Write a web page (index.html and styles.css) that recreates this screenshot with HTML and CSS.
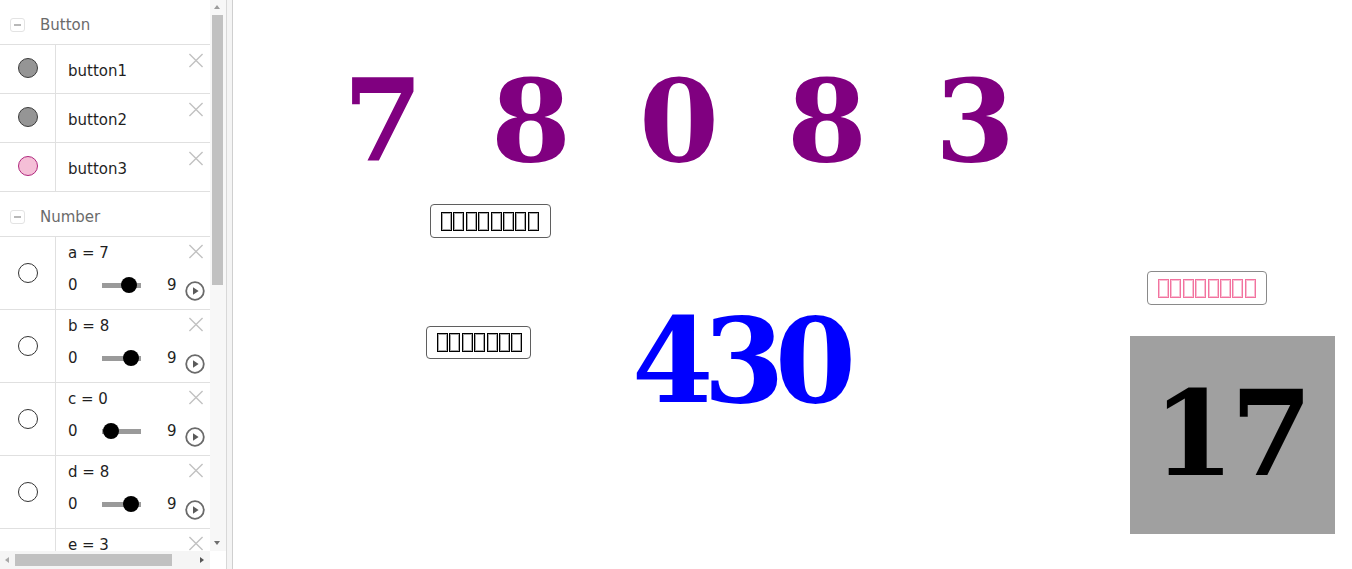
FILE: index.html
```html
<!DOCTYPE html>
<html lang="en">
<head>
<meta charset="utf-8">
<title>GeoGebra</title>
<link rel="stylesheet" href="styles.css">
</head>
<body>
<div class="app">
  <aside class="algebra">
    <div class="list">
      <div class="group-head"><span class="toggle"></span><span class="group-name">Button</span></div>

      <div class="item item-btn">
        <div class="marble"><span class="dot dot-grey"></span></div>
        <div class="content"><span class="label">button1</span></div>
        <div class="actions">
          <svg class="close" viewBox="0 0 16 16"><path d="M1 1 L15 15 M15 1 L1 15"/></svg>
        </div>
      </div>
      <div class="item item-btn">
        <div class="marble"><span class="dot dot-grey"></span></div>
        <div class="content"><span class="label">button2</span></div>
        <div class="actions">
          <svg class="close" viewBox="0 0 16 16"><path d="M1 1 L15 15 M15 1 L1 15"/></svg>
        </div>
      </div>
      <div class="item item-btn">
        <div class="marble"><span class="dot dot-pink"></span></div>
        <div class="content"><span class="label">button3</span></div>
        <div class="actions">
          <svg class="close" viewBox="0 0 16 16"><path d="M1 1 L15 15 M15 1 L1 15"/></svg>
        </div>
      </div>

      <div class="group-head"><span class="toggle"></span><span class="group-name">Number</span></div>

      <div class="item item-num">
        <div class="marble"><span class="dot dot-empty"></span></div>
        <div class="content">
          <div class="label">a = 7</div>
          <div class="slider-row"><span class="min">0</span><span class="track"><span class="knob" style="left:18px"></span></span><span class="max">9</span></div>
        </div>
        <div class="actions">
          <svg class="close" viewBox="0 0 16 16"><path d="M1 1 L15 15 M15 1 L1 15"/></svg>
          <svg class="play" viewBox="0 0 20 20"><circle cx="10" cy="10" r="8.8"/><path d="M8 6.3 L13.6 10 L8 13.7 Z"/></svg>
        </div>
      </div>
      <div class="item item-num">
        <div class="marble"><span class="dot dot-empty"></span></div>
        <div class="content">
          <div class="label">b = 8</div>
          <div class="slider-row"><span class="min">0</span><span class="track"><span class="knob" style="left:20.5px"></span></span><span class="max">9</span></div>
        </div>
        <div class="actions">
          <svg class="close" viewBox="0 0 16 16"><path d="M1 1 L15 15 M15 1 L1 15"/></svg>
          <svg class="play" viewBox="0 0 20 20"><circle cx="10" cy="10" r="8.8"/><path d="M8 6.3 L13.6 10 L8 13.7 Z"/></svg>
        </div>
      </div>
      <div class="item item-num">
        <div class="marble"><span class="dot dot-empty"></span></div>
        <div class="content">
          <div class="label">c = 0</div>
          <div class="slider-row"><span class="min">0</span><span class="track"><span class="knob" style="left:0px"></span></span><span class="max">9</span></div>
        </div>
        <div class="actions">
          <svg class="close" viewBox="0 0 16 16"><path d="M1 1 L15 15 M15 1 L1 15"/></svg>
          <svg class="play" viewBox="0 0 20 20"><circle cx="10" cy="10" r="8.8"/><path d="M8 6.3 L13.6 10 L8 13.7 Z"/></svg>
        </div>
      </div>
      <div class="item item-num">
        <div class="marble"><span class="dot dot-empty"></span></div>
        <div class="content">
          <div class="label">d = 8</div>
          <div class="slider-row"><span class="min">0</span><span class="track"><span class="knob" style="left:20.5px"></span></span><span class="max">9</span></div>
        </div>
        <div class="actions">
          <svg class="close" viewBox="0 0 16 16"><path d="M1 1 L15 15 M15 1 L1 15"/></svg>
          <svg class="play" viewBox="0 0 20 20"><circle cx="10" cy="10" r="8.8"/><path d="M8 6.3 L13.6 10 L8 13.7 Z"/></svg>
        </div>
      </div>
      <div class="item item-num">
        <div class="marble"><span class="dot dot-empty"></span></div>
        <div class="content">
          <div class="label">e = 3</div>
          <div class="slider-row"><span class="min">0</span><span class="track"><span class="knob" style="left:7.7px"></span></span><span class="max">9</span></div>
        </div>
        <div class="actions">
          <svg class="close" viewBox="0 0 16 16"><path d="M1 1 L15 15 M15 1 L1 15"/></svg>
          <svg class="play" viewBox="0 0 20 20"><circle cx="10" cy="10" r="8.8"/><path d="M8 6.3 L13.6 10 L8 13.7 Z"/></svg>
        </div>
      </div>
    </div>

    <div class="vscroll">
      <span class="arrow-cell"><span class="arrow arrow-up"></span></span>
      <span class="vthumb"></span>
      <span class="vspacer"></span>
      <span class="arrow-cell arrow-cell-down"><span class="arrow arrow-down"></span></span>
    </div>
    <div class="hscroll">
      <span class="harrow-cell"><span class="arrow arrow-left"></span></span>
      <span class="hthumb"></span>
      <span class="hspacer"></span>
      <span class="harrow-cell"><span class="arrow arrow-right"></span></span>
    </div>
    <div class="corner"></div>
  </aside>

  <div class="splitter"></div>

  <main class="canvas">
    <div class="digits">
      <span class="digit">7</span>
      <span class="digit">8</span>
      <span class="digit">0</span>
      <span class="digit">8</span>
      <span class="digit">3</span>
    </div>

    <div class="gbtn gbtn-1" title="button1"><span class="tofu"></span><span class="tofu"></span><span class="tofu"></span><span class="tofu"></span><span class="tofu"></span><span class="tofu"></span><span class="tofu"></span><span class="tofu"></span></div>
    <div class="gbtn gbtn-2" title="button2"><span class="tofu"></span><span class="tofu"></span><span class="tofu"></span><span class="tofu"></span><span class="tofu"></span><span class="tofu"></span><span class="tofu"></span></div>
    <div class="gbtn gbtn-3" title="button3"><span class="tofu"></span><span class="tofu"></span><span class="tofu"></span><span class="tofu"></span><span class="tofu"></span><span class="tofu"></span><span class="tofu"></span><span class="tofu"></span></div>

    <div class="result">430</div>

    <div class="score"><span class="score-num">17</span></div>
  </main>
</div>
</body>
</html>
```

FILE: styles.css
```css
* { box-sizing: border-box; }

html, body {
  margin: 0;
  padding: 0;
  background: #ffffff;
}

body {
  font-family: "DejaVu Sans", "Noto Sans", sans-serif;
  overflow: hidden;
}

.app {
  display: flex;
  width: 1352px;
  height: 569px;
}

/* ---------- Algebra view ---------- */
.algebra {
  flex: none;
  width: 226px;
  height: 569px;
  display: grid;
  grid-template-columns: 210px 16px;
  grid-template-rows: 551px 18px;
  background: #fff;
}

.list {
  overflow: hidden;
  display: flex;
  flex-direction: column;
}

.group-head {
  flex: none;
  height: 45px;
  display: flex;
  align-items: center;
  border-bottom: 1px solid #e0e0e0;
  padding-left: 10px;
  padding-top: 6px;
}

.toggle {
  position: relative;
  width: 15px;
  height: 14px;
  border: 1px solid #e3e3e3;
  border-radius: 3px;
}

.toggle::after {
  content: "";
  position: absolute;
  left: 3px;
  right: 3px;
  top: 5px;
  height: 1.5px;
  background: #b8b8b8;
}

.group-name {
  margin-left: 15px;
  font-size: 15px;
  color: #6b6b6b;
}

.item {
  flex: none;
  display: grid;
  grid-template-columns: 56px 1fr 28px;
  border-bottom: 1px solid #e0e0e0;
}

.item-btn { height: 49px; }
.item-num { height: 73px; }

.marble {
  display: flex;
  align-items: center;
  justify-content: center;
  border-right: 1px solid #e0e0e0;
}

.item-btn .marble { padding-bottom: 2px; }

.dot {
  width: 20px;
  height: 20px;
  border-radius: 50%;
  margin-left: 1px;
}

.dot-grey {
  background: #959595;
  border: 1px solid #3c3c3c;
}

.dot-pink {
  background: #f5bfd7;
  border: 1px solid #b0277d;
}

.dot-empty {
  background: #fff;
  border: 1px solid #333;
}

.content {
  padding-left: 12px;
  color: #1f1f1f;
  font-size: 15px;
  line-height: 18px;
}

.item-btn .content { padding-top: 17px; }
.item-num .content { padding-top: 7px; }

.slider-row {
  display: flex;
  align-items: center;
  margin-top: 14px;
  height: 18px;
}

.min { width: 9px; }

.track {
  position: relative;
  width: 39px;
  height: 5px;
  margin-left: 25px;
  background: #9a9a9a;
}

.knob {
  position: absolute;
  top: -5.5px;
  margin-left: 0.5px;
  width: 16px;
  height: 16px;
  border-radius: 50%;
  background: #000;
}

.max { margin-left: 26px; }

.actions {
  display: flex;
  flex-direction: column;
  align-items: center;
  padding-top: 8px;
}

.item-num .actions { padding-top: 7px; }

.close {
  width: 16px;
  height: 15px;
  fill: none;
  stroke: #c2c2c2;
  stroke-width: 1.5;
}

.play {
  width: 20px;
  height: 20px;
  margin-top: 22px;
  margin-left: -3px;
}

.play circle {
  fill: none;
  stroke: #6a6a6a;
  stroke-width: 1.8;
}

.play path { fill: #5a5a5a; }

/* scrollbars */
.vscroll {
  display: flex;
  flex-direction: column;
  background: #f7f7f7;
}

.arrow-cell {
  height: 14px;
  display: flex;
  align-items: center;
  justify-content: center;
  padding-right: 2px;
}

.arrow-cell-down { height: 16px; }

.arrow { width: 0; height: 0; }

.arrow-up {
  border-left: 3.5px solid transparent;
  border-right: 3.5px solid transparent;
  border-bottom: 4px solid #9c9c9c;
}

.arrow-down {
  border-left: 3.5px solid transparent;
  border-right: 3.5px solid transparent;
  border-top: 4px solid #6e6e6e;
}

.vthumb {
  margin-top: 1px;
  margin-left: 2px;
  width: 11px;
  height: 270px;
  background: #c1c1c1;
}

.vspacer { flex: 1; }

.hscroll {
  display: flex;
  align-items: center;
  background: #f5f5f5;
}

.harrow-cell {
  width: 14px;
  height: 18px;
  display: flex;
  align-items: center;
  justify-content: center;
}

.arrow-left {
  border-top: 3.5px solid transparent;
  border-bottom: 3.5px solid transparent;
  border-right: 4px solid #a8a8a8;
}

.arrow-right {
  border-top: 3.5px solid transparent;
  border-bottom: 3.5px solid transparent;
  border-left: 4px solid #555;
  margin-left: -3px;
}

.hthumb {
  margin-left: 1px;
  width: 157px;
  height: 12px;
  background: #c1c1c1;
}

.hspacer { flex: 1; }

.corner { background: #fff; }

.splitter {
  flex: none;
  width: 7px;
  height: 569px;
  background: #f4f4f4;
  border-left: 1px solid #d8d8d8;
  border-right: 1px solid #cfcfcf;
}

/* ---------- Graphics view ---------- */
.canvas {
  position: relative;
  flex: 1;
  height: 569px;
  background: #fff;
  overflow: hidden;
}

.digits {
  position: absolute;
  left: 76px;
  top: 63px;
  display: flex;
}

.digit {
  width: 148px;
  text-align: center;
  font-family: "DejaVu Serif", "Liberation Serif", serif;
  font-weight: bold;
  font-size: 115px;
  line-height: 1;
  color: #800080;
}

.gbtn {
  position: absolute;
  display: flex;
  align-items: center;
  gap: 1.4px;
  padding-left: 10px;
  border: 1px solid #5f5f5f;
  border-radius: 4px;
  background: #fff;
}

.gbtn-1 { left: 197px; top: 204px; width: 121px; height: 34px; }
.gbtn-2 { left: 193px; top: 326px; width: 105px; height: 33px; }
.gbtn-3 { left: 914px; top: 271px; width: 120px; height: 34px; border-color: #8a8a8a; }

.tofu {
  width: 11px;
  height: 19px;
  border: 1px solid #000;
  box-shadow: inset 0 0 0 1px rgba(0, 0, 0, 0.35);
}

.gbtn-3 .tofu {
  border-color: #f2739f;
  box-shadow: inset 0 0 0 1px rgba(242, 115, 159, 0.45);
}

.result {
  position: absolute;
  left: 350px;
  top: 303px;
  width: 300px;
  padding-left: 12px;
  text-align: center;
  font-family: "DejaVu Serif", "Liberation Serif", serif;
  font-weight: bold;
  font-size: 117px;
  line-height: 1;
  letter-spacing: -10px;
  color: #0000ff;
}

.score {
  position: absolute;
  left: 897px;
  top: 336px;
  width: 205px;
  height: 198px;
  background: #a0a0a0;
  display: flex;
  align-items: center;
  justify-content: center;
  padding-right: 4px;
  padding-bottom: 3px;
}

.score-num {
  font-family: "DejaVu Serif", "Liberation Serif", serif;
  font-weight: bold;
  font-size: 118px;
  line-height: 1;
  letter-spacing: -4px;
  color: #000;
}
```
